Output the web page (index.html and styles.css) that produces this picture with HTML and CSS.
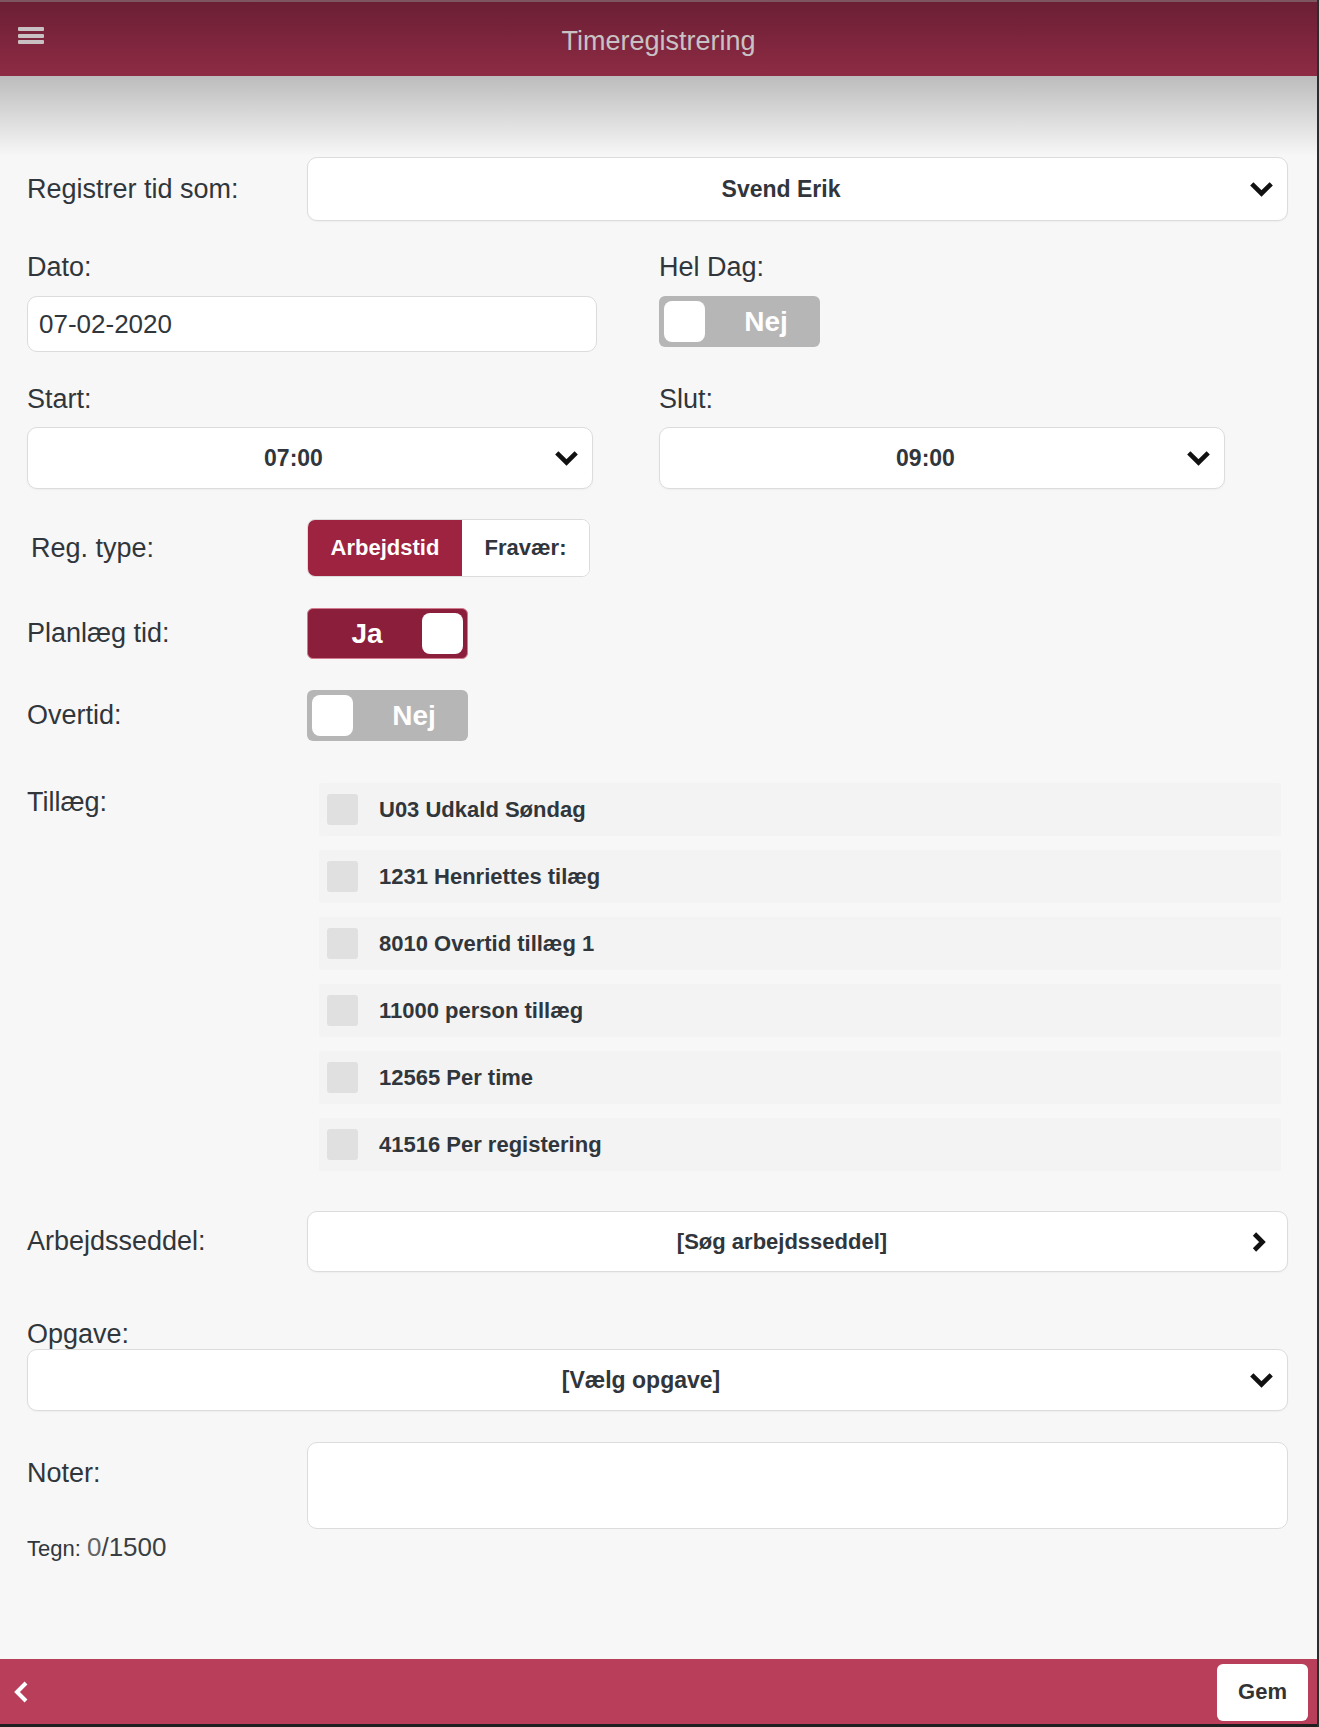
FILE: index.html
```html
<!DOCTYPE html>
<html lang="da">
<head>
  <meta charset="UTF-8">
  <meta name="viewport" content="width=device-width, initial-scale=1.0">
  <title>Timeregistrering</title>
  <link rel="stylesheet" href="styles.css">
</head>
<body>
  <div class="app">
    <!-- Top bar -->
    <header class="topbar">
      <span class="menu"><i></i><i></i><i></i></span>
      <h1>Timeregistrering</h1>
      <span></span>
    </header>

    <main class="content">
      <div class="row row-first">
        <label class="lbl">Registrer tid som:</label>
        <div class="picker picker-tall">
          <span>Svend Erik</span>
          <svg class="chev" width="25" height="16" viewBox="0 0 25 16"><polyline points="2.8,2.8 12.5,12.5 22.2,2.8"/></svg>
        </div>
      </div>

      <!-- Date / whole day -->
      <div class="pair">
        <div class="col">
          <label class="lbl">Dato:</label>
          <div class="textbox">07-02-2020</div>
        </div>
        <div class="col">
          <label class="lbl">Hel Dag:</label>
          <div class="switch switch-off"><span class="knob"></span><span class="switch-text">Nej</span></div>
        </div>
      </div>

      <!-- Start / end -->
      <div class="pair pair-times">
        <div class="col">
          <label class="lbl">Start:</label>
          <div class="picker">
            <span>07:00</span>
            <svg class="chev" width="25" height="16" viewBox="0 0 25 16"><polyline points="2.8,2.8 12.5,12.5 22.2,2.8"/></svg>
          </div>
        </div>
        <div class="col">
          <label class="lbl">Slut:</label>
          <div class="picker">
            <span>09:00</span>
            <svg class="chev" width="25" height="16" viewBox="0 0 25 16"><polyline points="2.8,2.8 12.5,12.5 22.2,2.8"/></svg>
          </div>
        </div>
      </div>

      <div class="row row-regtype">
        <label class="lbl lbl-indent">Reg. type:</label>
        <div class="segment">
          <button class="seg-btn active">Arbejdstid</button>
          <button class="seg-btn">Fravær:</button>
        </div>
      </div>

      <div class="row row-toggle">
        <label class="lbl">Planlæg tid:</label>
        <div class="switch switch-on"><span class="knob"></span><span class="switch-text">Ja</span></div>
      </div>

      <div class="row row-toggle">
        <label class="lbl">Overtid:</label>
        <div class="switch switch-off"><span class="knob"></span><span class="switch-text">Nej</span></div>
      </div>

      <!-- Extras -->
      <div class="row row-extras">
        <label class="lbl">Tillæg:</label>
        <ul class="extras">
          <li><span class="check"></span>U03 Udkald Søndag</li>
          <li><span class="check"></span>1231 Henriettes tilæg</li>
          <li><span class="check"></span>8010 Overtid tillæg 1</li>
          <li><span class="check"></span>11000 person tillæg</li>
          <li><span class="check"></span>12565 Per time</li>
          <li><span class="check"></span>41516 Per registering</li>
        </ul>
      </div>

      <div class="row row-sheet">
        <label class="lbl">Arbejdsseddel:</label>
        <div class="picker picker-link">
          <span>[Søg arbejdsseddel]</span>
          <svg class="chev" width="16" height="22" viewBox="0 0 16 22"><polyline points="3.5,3 11.5,11 3.5,19"/></svg>
        </div>
      </div>

      <div class="task">
        <label class="lbl">Opgave:</label>
        <div class="picker">
          <span>[Vælg opgave]</span>
          <svg class="chev" width="25" height="16" viewBox="0 0 25 16"><polyline points="2.8,2.8 12.5,12.5 22.2,2.8"/></svg>
        </div>
      </div>

      <div class="row row-notes">
        <label class="lbl">Noter:</label>
        <div class="notes"></div>
      </div>
      <div class="counter">Tegn: <span class="count"><span class="zero">0</span>/1500</span></div>
    </main>

    <!-- Bottom bar -->
    <footer class="bottombar">
      <svg class="back" width="18" height="24" viewBox="0 0 18 24"><polyline points="14,3 5,12 14,21"/></svg>
      <button class="save">Gem</button>
    </footer>
  </div>
</body>
</html>
```

FILE: styles.css
```css
/* General */
html, body {
  margin: 0;
  height: 100%;
}

body {
  font-family: "Liberation Sans", Arial, sans-serif;
  color: #30363b;
  background: #f7f7f7;
}

.app {
  height: 100vh;
  display: flex;
  flex-direction: column;
  border-right: 2px solid #2d2d2d;
  box-sizing: border-box;
}

/* Top bar */
.topbar {
  height: 76px;
  box-sizing: border-box;
  border-top: 2px solid #7d5661;
  background: linear-gradient(to bottom, #6b1f35, #8e2b44);
  display: grid;
  grid-template-columns: 60px 1fr 60px;
  align-items: start;
}

.topbar h1 {
  margin: 0;
  padding-top: 24px;
  text-align: center;
  font-size: 27px;
  line-height: 31px;
  font-weight: normal;
  color: #c9c2c4;
}

.menu {
  display: flex;
  flex-direction: column;
  gap: 2.5px;
  width: 26px;
  margin: 25px 0 0 18px;
}

.menu i {
  display: block;
  height: 4px;
  border-radius: 1px;
  background: #c9c0c3;
}

/* Content */
.content {
  flex: 1;
  background: linear-gradient(to bottom, #bcbcbc 0, #f7f7f7 80px) no-repeat #f7f7f7;
  background-size: 100% 80px;
  padding: 81px 29px 0 27px;
}

.lbl {
  display: block;
  font-size: 27px;
  line-height: 31px;
}

.lbl-indent {
  padding-left: 4px;
}

.row {
  display: grid;
  grid-template-columns: 280px 1fr;
  align-items: center;
}

/* Select look-alikes */
.picker {
  height: 62px;
  box-sizing: border-box;
  background: #fff;
  border: 1px solid #dcdcdc;
  border-radius: 10px;
  display: flex;
  align-items: center;
  padding: 0 13px 0 5px;
  box-shadow: 0 1px 2px rgba(0, 0, 0, 0.04);
}

.picker span {
  flex: 1;
  text-align: center;
  font-weight: bold;
  font-size: 23px;
  color: #30363b;
}

.picker-tall {
  height: 64px;
}

.picker-link {
  height: 61px;
  padding-right: 20px;
}

.picker-link span {
  font-size: 22px;
}

.chev polyline {
  fill: none;
  stroke: #111;
  stroke-width: 4.6;
}

/* Two column part */
.pair {
  display: grid;
  grid-template-columns: 566px 566px;
  column-gap: 66px;
  margin-top: 31px;
}

.pair .lbl {
  margin-bottom: 13px;
}

.pair-times {
  margin-top: 32px;
}

.pair-times .lbl {
  margin-bottom: 12px;
}

.textbox {
  width: 570px;
  height: 56px;
  box-sizing: border-box;
  background: #fff;
  border: 1px solid #dcdcdc;
  border-radius: 10px;
  padding-left: 11px;
  font-size: 26px;
  line-height: 54px;
  color: #30363b;
}

/* Switches */
.switch {
  width: 161px;
  height: 51px;
  box-sizing: border-box;
  border: 1px solid transparent;
  border-radius: 6px;
  display: flex;
  align-items: center;
  padding: 0 4px;
}

.knob {
  width: 41px;
  height: 41px;
  border-radius: 8px;
  background: #fff;
}

.switch-text {
  flex: 1;
  text-align: center;
  font-weight: bold;
  font-size: 28px;
  color: #fff;
}

.switch-off {
  background: #b6b6b6;
}

.switch-off .switch-text {
  padding-left: 12px;
}

.switch-on {
  flex-direction: row-reverse;
  background: #8b1e3b;
  border-color: #d27b8f;
}

/* Reg type */
.row-regtype {
  margin-top: 30px;
}

.segment {
  width: 283px;
  height: 58px;
  box-sizing: border-box;
  display: flex;
  border: 1px solid #dcdcdc;
  border-radius: 8px;
  overflow: hidden;
  background: #fff;
}

.seg-btn {
  border: none;
  background: #fff;
  font-family: inherit;
  font-weight: bold;
  font-size: 22px;
  color: #30363b;
  flex: 1;
  padding: 0;
}

.seg-btn.active {
  flex: 0 0 154px;
  background: #9d2341;
  color: #fff;
}

.row-toggle {
  margin-top: 31px;
}

/* Extras list */
.row-extras {
  margin-top: 42px;
  align-items: start;
}

.row-extras .lbl {
  margin-top: 4px;
}

.extras {
  list-style: none;
  margin: 0 7px 0 12px;
  padding: 0;
  display: flex;
  flex-direction: column;
  gap: 14px;
}

.extras li {
  height: 53px;
  display: flex;
  align-items: center;
  padding-left: 8px;
  background: #f3f3f3;
  border-radius: 3px;
  font-weight: bold;
  font-size: 22px;
}

.check {
  width: 31px;
  height: 31px;
  border-radius: 3px;
  background: #e0e0e0;
  margin-right: 21px;
}

/* Work sheet, task, notes */
.row-sheet {
  margin-top: 40px;
}

.task {
  margin-top: 47px;
}

.task .lbl {
  line-height: 30px;
}

.row-notes {
  margin-top: 31px;
  align-items: start;
}

.row-notes .lbl {
  margin-top: 16px;
}

.notes {
  height: 87px;
  box-sizing: border-box;
  background: #fff;
  border: 1px solid #dcdcdc;
  border-radius: 10px;
}

.counter {
  margin-top: 3px;
  font-size: 22px;
  line-height: 30px;
}

.count {
  font-size: 26px;
  color: #3a3f44;
}

.zero {
  font-weight: 300;
  color: #666;
}

/* Bottom bar */
.bottombar {
  height: 68px;
  box-sizing: border-box;
  border-bottom: 3px solid #1f1f1f;
  background: #b93e5a;
  display: flex;
  align-items: center;
  justify-content: space-between;
  padding: 1px 9px 0 12px;
}

.back polyline {
  fill: none;
  stroke: #fff;
  stroke-width: 4;
}

.save {
  width: 91px;
  height: 57px;
  border: none;
  border-radius: 6px;
  background: #fff;
  font-family: inherit;
  font-weight: bold;
  font-size: 22px;
  color: #333;
}
```
